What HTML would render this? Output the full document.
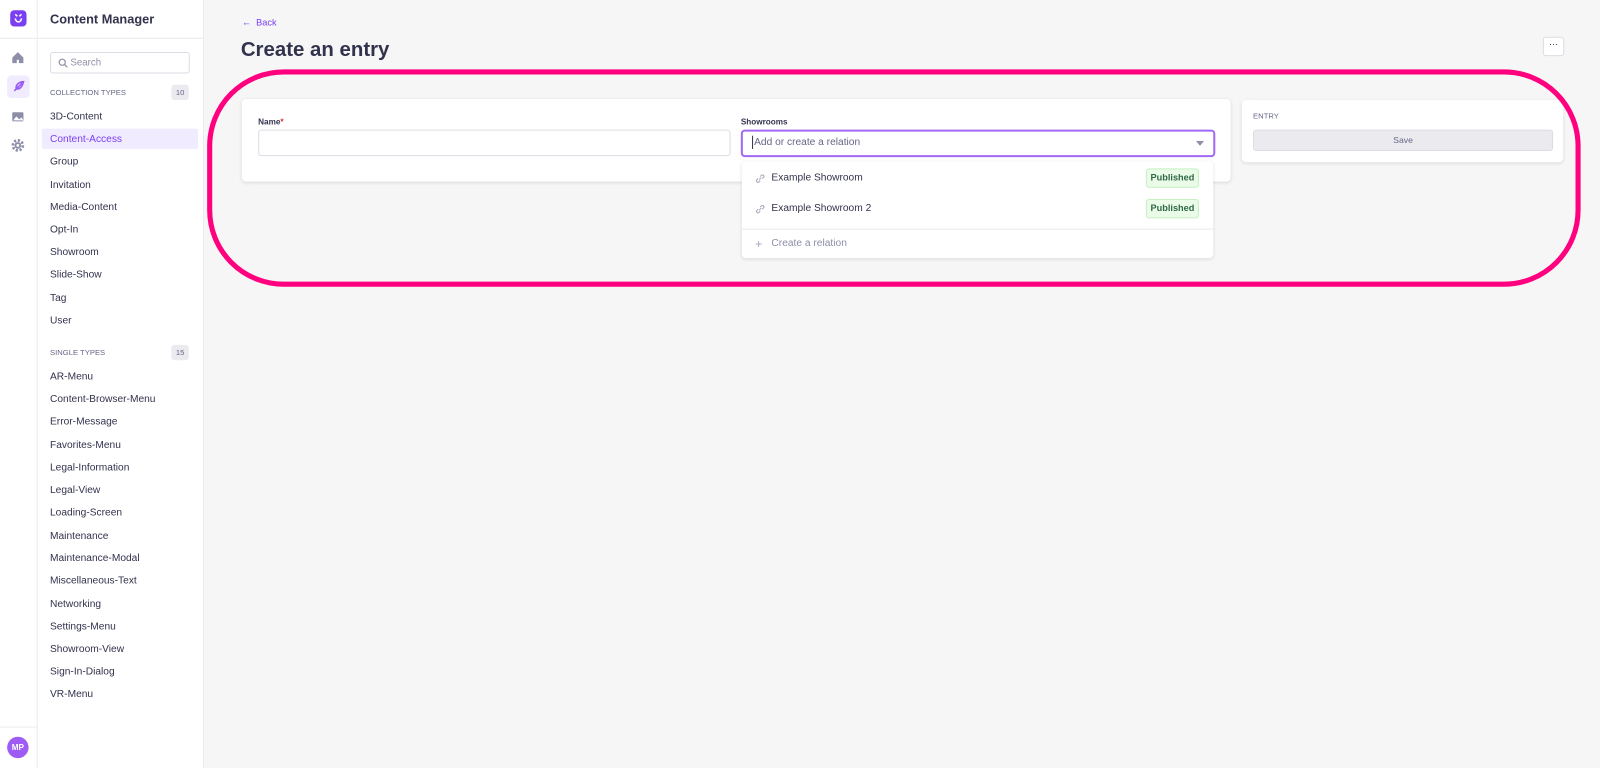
<!DOCTYPE html>
<html><head><meta charset="utf-8"><style>
*{box-sizing:border-box;margin:0;padding:0}
html,body{width:1600px;height:768px;overflow:hidden}
body{background:#f6f6f6;font-family:"Liberation Sans",sans-serif;color:#32324d;position:relative}
#w{position:absolute;left:0;top:0;width:1568px;height:753px;transform:scale(1.020408);transform-origin:0 0}
.nav{position:absolute;left:0;top:0;width:37px;height:753px;background:#fff;border-right:1px solid #eaeaef}
.side{position:absolute;left:37px;top:0;width:163px;height:753px;background:#fff;border-right:1px solid #eaeaef}
.ab{position:absolute}
.item{position:absolute;left:12px;font-size:10px;color:#32324d}
.sec{position:absolute;left:12px;font-size:7.5px;color:#666687}
.cnt{position:absolute;left:131px;width:17px;height:15px;background:#eaeaef;border-radius:3px;font-size:7.5px;color:#666687;text-align:center;line-height:15px}
.card{position:absolute;background:#fff;border-radius:4px;box-shadow:0 1px 3px rgba(33,33,52,.12)}
</style></head><body><div id="w">
<div class="nav">
 <div class="ab" style="left:10px;top:10px;width:16px;height:16px;background:#7b3ff2;border-radius:4px"></div>
 <svg class="ab" style="left:12px;top:12px" width="12" height="12" viewBox="0 0 12 12"><path d="M3 2l2 2M9 2L7 4M3 6c0 2 1.5 3.5 3 3.5S9 8 9 6" stroke="#fff" stroke-width="1.5" fill="none"/></svg>
 <div class="ab" style="left:0;top:37px;width:37px;border-top:1px solid #eaeaef"></div>
 <svg class="ab" style="left:11px;top:50px" width="13" height="13" viewBox="0 0 12 12"><path d="M1 6L6 1l5 5v5H7V8H5v3H1z" fill="#8e8ea9"/></svg>
 <div class="ab" style="left:7px;top:74px;width:22px;height:22px;background:#f0ebff;border-radius:4px"></div>
 <svg class="ab" style="left:11px;top:78px" width="14" height="14" viewBox="0 0 14 14"><path d="M3 11L11 3M5 9c-1-4 3-7 7-7-1 4-3 8-7 7z" stroke="#9a5cf5" stroke-width="1.6" fill="none"/></svg>
 <svg class="ab" style="left:11px;top:108px" width="13" height="12" viewBox="0 0 13 12"><rect x="1" y="2" width="11" height="9" rx="1" fill="#8e8ea9"/><path d="M2 10l3-4 3 3 2-2 2 3z" fill="#fff"/></svg>
 <svg class="ab" style="left:11px;top:136px" width="13" height="13" viewBox="0 0 12 12"><circle cx="6" cy="6" r="4.5" fill="none" stroke="#8e8ea9" stroke-width="2.5" stroke-dasharray="2 1.5"/><circle cx="6" cy="6" r="3" fill="#8e8ea9"/><circle cx="6" cy="6" r="1.3" fill="#fff"/></svg>
 <div class="ab" style="left:0;top:712px;width:37px;border-top:1px solid #eaeaef"></div>
 <div class="ab" style="left:7px;top:722px;width:21px;height:21px;border-radius:50%;background:#9e5cf5;color:#fff;font-size:8px;font-weight:bold;text-align:center;line-height:21px">MP</div>
</div>
<div class="side">
 <div class="ab" style="left:12px;top:12px;font-size:12.5px;font-weight:bold;color:#32324d">Content Manager</div>
 <div class="ab" style="left:0;top:37px;width:163px;border-top:1px solid #eaeaef"></div>
 <div class="ab" style="left:12px;top:51px;width:137px;height:21px;border:1px solid #dcdce4;border-radius:3px"></div>
 <svg class="ab" style="left:20px;top:57px" width="10" height="10" viewBox="0 0 10 10"><circle cx="4" cy="4" r="3" stroke="#8e8ea9" fill="none" stroke-width="1.2"/><path d="M6.3 6.3L9 9" stroke="#8e8ea9" stroke-width="1.2"/></svg>
 <div class="ab" style="left:32px;top:56px;font-size:9.5px;color:#8e8ea9">Search</div>
 <div class="sec" style="top:86px">COLLECTION TYPES</div><div class="cnt" style="top:83px">10</div>
 <div class="ab" style="left:4px;top:126px;width:153px;height:20px;background:#f0ebff;border-radius:2px"></div>
 <div class="item" style="top:109px">3D-Content</div>
 <div class="item" style="top:131px;color:#7b3ff2">Content-Access</div>
 <div class="item" style="top:153px">Group</div>
 <div class="item" style="top:176px">Invitation</div>
 <div class="item" style="top:198px">Media-Content</div>
 <div class="item" style="top:220px">Opt-In</div>
 <div class="item" style="top:242px">Showroom</div>
 <div class="item" style="top:264px">Slide-Show</div>
 <div class="item" style="top:287px">Tag</div>
 <div class="item" style="top:309px">User</div>
 <div class="sec" style="top:341px">SINGLE TYPES</div><div class="cnt" style="top:338px">15</div>
 <div class="item" style="top:364px">AR-Menu</div>
 <div class="item" style="top:386px">Content-Browser-Menu</div>
 <div class="item" style="top:408px">Error-Message</div>
 <div class="item" style="top:431px">Favorites-Menu</div>
 <div class="item" style="top:453px">Legal-Information</div>
 <div class="item" style="top:475px">Legal-View</div>
 <div class="item" style="top:497px">Loading-Screen</div>
 <div class="item" style="top:520px">Maintenance</div>
 <div class="item" style="top:542px">Maintenance-Modal</div>
 <div class="item" style="top:564px">Miscellaneous-Text</div>
 <div class="item" style="top:587px">Networking</div>
 <div class="item" style="top:609px">Settings-Menu</div>
 <div class="item" style="top:631px">Showroom-View</div>
 <div class="item" style="top:653px">Sign-In-Dialog</div>
 <div class="item" style="top:675px">VR-Menu</div>
</div>
<div class="ab" style="left:237px;top:17px;font-size:9px;color:#7b3ff2">←&nbsp; Back</div>
<div class="ab" style="left:236px;top:38px;font-size:20px;font-weight:bold;color:#32324d">Create an entry</div>
<div class="ab" style="left:1512px;top:36px;width:21px;height:19px;background:#fff;border:1px solid #dcdce4;border-radius:3px;font-size:9px;text-align:center;line-height:13px;color:#32324d">···</div>
<div class="card" style="left:237px;top:97px;width:969px;height:81px"></div>
<div class="ab" style="left:253px;top:115px;font-size:8px;font-weight:bold">Name<span style="color:#d02b20">*</span></div>
<div class="ab" style="left:253px;top:127px;width:463px;height:26px;background:#fff;border:1px solid #dcdce4;border-radius:3px"></div>
<div class="ab" style="left:726px;top:115px;font-size:8px;font-weight:bold">Showrooms</div>
<div class="ab" style="left:726px;top:127px;width:465px;height:27px;background:#fff;border:2px solid #a06af5;border-radius:4px"></div>
<div class="ab" style="left:737px;top:133px;width:1px;height:13px;background:#32324d"></div>
<div class="ab" style="left:739px;top:134px;font-size:10px;color:#666687">Add or create a relation</div>
<svg class="ab" style="left:1172px;top:138px" width="8" height="5"><path d="M0 0h8L4 5z" fill="#8e8ea9"/></svg>
<div class="card" style="left:727px;top:158px;width:462px;height:95px"></div>
<svg class="ab" style="left:740px;top:170px" width="10" height="10" viewBox="0 0 10 10"><path d="M4 6l2-2M3 5L1.8 6.2a1.4 1.4 0 002 2L5 7M7 5l1.2-1.2a1.4 1.4 0 00-2-2L5 3" stroke="#a5a5ba" fill="none" stroke-width="1"/></svg>
<div class="ab" style="left:756px;top:169px;font-size:10px">Example Showroom</div>
<div class="ab" style="left:1123px;top:165px;width:52px;height:19px;background:#eafbe7;border:1px solid #c6f0c2;border-radius:3px;font-size:9px;font-weight:bold;color:#2f6846;text-align:center;line-height:17px">Published</div>
<svg class="ab" style="left:740px;top:200px" width="10" height="10" viewBox="0 0 10 10"><path d="M4 6l2-2M3 5L1.8 6.2a1.4 1.4 0 002 2L5 7M7 5l1.2-1.2a1.4 1.4 0 00-2-2L5 3" stroke="#a5a5ba" fill="none" stroke-width="1"/></svg>
<div class="ab" style="left:756px;top:199px;font-size:10px">Example Showroom 2</div>
<div class="ab" style="left:1123px;top:195px;width:52px;height:19px;background:#eafbe7;border:1px solid #c6f0c2;border-radius:3px;font-size:9px;font-weight:bold;color:#2f6846;text-align:center;line-height:17px">Published</div>
<div class="ab" style="left:727px;top:224px;width:462px;border-top:1px solid #eaeaef"></div>
<div class="ab" style="left:740px;top:232px;font-size:12px;color:#a5a5ba">+</div>
<div class="ab" style="left:756px;top:233px;font-size:10px;color:#8e8ea9">Create a relation</div>
<div class="card" style="left:1217px;top:98px;width:315px;height:61px"></div>
<div class="ab" style="left:1228px;top:109px;font-size:7.5px;color:#666687">ENTRY</div>
<div class="ab" style="left:1228px;top:127px;width:294px;height:21px;background:#eaeaef;border:1px solid #dcdce4;border-radius:3px;font-size:8.5px;color:#666687;text-align:center;line-height:19px">Save</div>
<div class="ab" style="left:203px;top:68px;width:1346px;height:213px;border:5px solid #ff007f;border-radius:75px"></div>
</div></body></html>
